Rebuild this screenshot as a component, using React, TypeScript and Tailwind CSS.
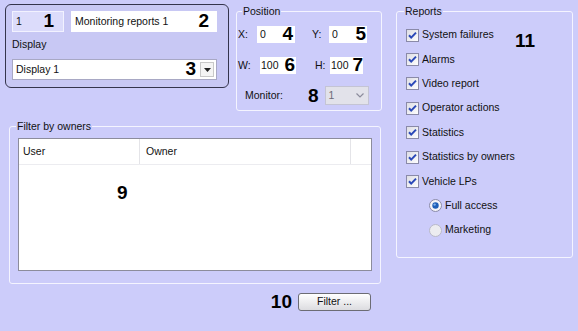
import React from "react"

function Num({ children }: { children: React.ReactNode }) {
    return <span className="font-bold text-[19px] leading-none text-black">{children}</span>
}

function CheckBox() {
    return (
        <svg width="13" height="13" viewBox="0 0 13 13" className="shrink-0">
            <defs>
                <linearGradient id="cbg" x1="0" y1="0" x2="1" y2="1">
                    <stop offset="0" stopColor="#dcdce4" />
                    <stop offset="1" stopColor="#ffffff" />
                </linearGradient>
            </defs>
            <rect x="0.5" y="0.5" width="12" height="12" fill="url(#cbg)" stroke="#8a8aa8" />
            <path d="M3 6.2 L5.2 8.6 L10 3.6" fill="none" stroke="#2a48b8" strokeWidth="2" />
        </svg>
    )
}

function Radio({ on }: { on?: boolean }) {
    return (
        <svg width="13" height="13" viewBox="0 0 13 13" className="shrink-0">
            <circle cx="6.5" cy="6.5" r="6" fill={on ? "#f4f4f8" : "#ececf0"} stroke={on ? "#8a8aa8" : "#b8b8c8"} />
            {on && <circle cx="6.5" cy="6.5" r="3.2" fill="#1d5fb8" />}
            {on && <circle cx="5.6" cy="5.6" r="1.2" fill="#7fb0ea" />}
        </svg>
    )
}

const reports = [
    "System failures",
    "Alarms",
    "Video report",
    "Operator actions",
    "Statistics",
    "Statistics by owners",
    "Vehicle LPs",
]

export default function App() {
    return (
        <div className="w-[578px] h-[331px] bg-[#ccccfa] flex text-[10.5px] text-[#111] font-['Liberation_Sans',Arial,sans-serif] overflow-hidden">
            <div className="flex flex-col pl-[5px] pt-[4px] w-[390px] shrink-0">
                <div className="flex items-start">
                    {/* camera / display panel */}
                    <div className="w-[224px] h-[84px] rounded-[6px] border border-[#34344c] bg-[#c8c8f4] px-[6px] pt-[6px] flex flex-col">
                        <div className="flex gap-[7px]">
                            <div className="w-[52px] h-[21px] bg-[#dcdcfb] border border-[#f2f2ff] flex items-center pl-[3px] pr-[9px]">
                                <span>1</span>
                                <span className="ml-auto"><Num>1</Num></span>
                            </div>
                            <div className="w-[146px] h-[21px] bg-white flex items-center pl-[4px] pr-[8px]">
                                <span>Monitoring reports 1</span>
                                <span className="ml-auto"><Num>2</Num></span>
                            </div>
                        </div>
                        <div className="mt-[6px] leading-[13px]">Display</div>
                        <div className="mt-[8px] w-[205px] h-[21px] bg-white border border-[#a8a8c4] flex items-center pl-[3px] pr-[2px]">
                            <span>Display 1</span>
                            <span className="ml-auto mr-[4px]"><Num>3</Num></span>
                            <div className="w-[14px] h-[15px] bg-[#f4f4f4] border border-[#c8c8c8] flex items-center justify-center">
                                <svg width="7" height="4" viewBox="0 0 7 4"><path d="M0 0 H7 L3.5 4 Z" fill="#222" /></svg>
                            </div>
                        </div>
                    </div>

                    {/* position */}
                    <fieldset className="ml-[7px] mt-[1px] w-[146px] h-[106px] border border-[#f4f4ff] rounded-[3px]">
                        <legend className="ml-[5px] px-[1px] leading-[13px]">Position</legend>
                        <div className="flex items-center h-[17px] mt-[8px]">
                            <span className="w-[20px] pl-[1px]">X:</span>
                            <div className="w-[38px] h-[17px] bg-white flex items-center pl-[3px] pr-[2px]">
                                <span>0</span>
                                <span className="ml-auto"><Num>4</Num></span>
                            </div>
                            <span className="ml-[17px] w-[17px]">Y:</span>
                            <div className="w-[38px] h-[17px] bg-white flex items-center pl-[3px] pr-[1px]">
                                <span>0</span>
                                <span className="ml-auto"><Num>5</Num></span>
                            </div>
                        </div>
                        <div className="flex items-center h-[17px] mt-[14px]">
                            <span className="w-[23px] pl-[1px]">W:</span>
                            <div className="w-[36px] h-[17px] bg-white flex items-center pl-[1px] pr-[1px]">
                                <span>100</span>
                                <span className="ml-auto"><Num>6</Num></span>
                            </div>
                            <span className="ml-[19px] w-[15px]">H:</span>
                            <div className="w-[33px] h-[17px] bg-white flex items-center pl-[1px]">
                                <span>100</span>
                                <span className="ml-auto"><Num>7</Num></span>
                            </div>
                        </div>
                        <div className="flex items-center h-[19px] mt-[12px]">
                            <span className="pl-[8px] w-[71px]">Monitor:</span>
                            <Num>8</Num>
                            <div className="ml-[6px] w-[44px] h-[19px] bg-[#e2e2ea] border border-[#c4c4d4] flex items-center pl-[3px] pr-[4px] text-[#6c6c78]">
                                <span>1</span>
                                <svg className="ml-auto" width="8" height="5" viewBox="0 0 8 5"><path d="M0.5 0.5 L4 4 L7.5 0.5" fill="none" stroke="#8c8c9c" strokeWidth="1.2" /></svg>
                            </div>
                        </div>
                    </fieldset>
                </div>

                {/* filter by owners */}
                <fieldset className="ml-[4px] mt-[9px] w-[372px] h-[164px] border border-[#f4f4ff] rounded-[3px]">
                    <legend className="ml-[6px] px-[1px] leading-[13px]">Filter by owners</legend>
                    <div className="relative ml-[8px] mt-[5px] w-[354px] h-[133px] bg-white border border-[#8c8c9c]">
                        <div className="flex h-[26px] items-center border-b border-[#ececf0]">
                            <div className="w-[121px] h-full flex items-center pl-[4px] border-r border-[#e4e4e8]">User</div>
                            <div className="w-[211px] h-full flex items-center pl-[6px] border-r border-[#e4e4e8]">Owner</div>
                        </div>
                        <span className="absolute left-[98px] top-[44px]"><Num>9</Num></span>
                    </div>
                </fieldset>

                <div className="flex items-center justify-end gap-[6px] w-[366px] mt-[8px]">
                    <Num>10</Num>
                    <button className="w-[73px] h-[18px] rounded-[3px] border border-[#6c6c74] bg-gradient-to-b from-white to-[#dcdce0] text-[10.5px] leading-none">
                        Filter ...
                    </button>
                </div>
            </div>

            {/* reports */}
            <fieldset className="relative ml-[6px] mt-[5px] w-[177px] h-[253px] border border-[#f4f4ff] rounded-[3px]">
                <legend className="ml-[7px] px-[1px] leading-[13px]">Reports</legend>
                <div className="flex flex-col mt-[5px]">
                    {reports.map((r) => (
                        <div key={r} className="h-[24.4px] flex items-center gap-[3px] pl-[9px]">
                            <CheckBox />
                            <span>{r}</span>
                        </div>
                    ))}
                    <div className="h-[24.4px] flex items-center gap-[3px] pl-[32px]">
                        <Radio on />
                        <span>Full access</span>
                    </div>
                    <div className="h-[24.4px] flex items-center gap-[3px] pl-[32px]">
                        <Radio />
                        <span>Marketing</span>
                    </div>
                </div>
                <span className="absolute left-[118px] top-[13px]"><Num>11</Num></span>
            </fieldset>
        </div>
    )
}
